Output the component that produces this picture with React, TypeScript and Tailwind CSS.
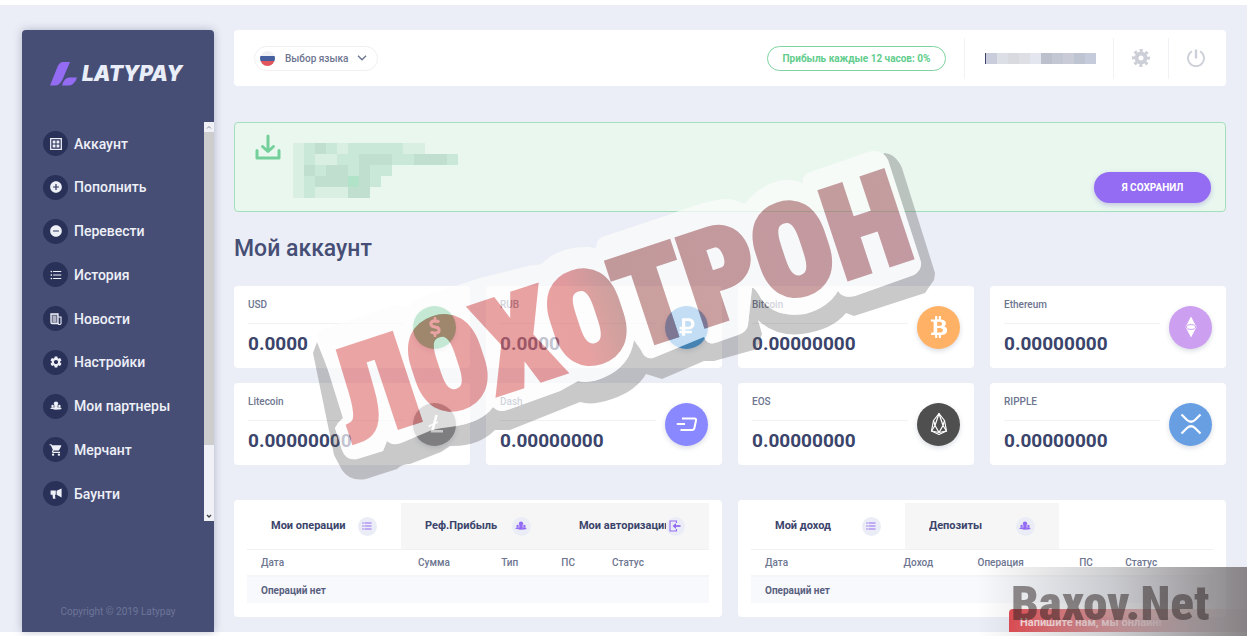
import type { ReactNode } from 'react'
import { FaBtc, FaDollarSign, FaRubleSign } from 'react-icons/fa'
import {
  MdAddCircle,
  MdFormatListBulleted,
  MdRemoveCircle,
  MdSettings,
  MdShoppingCart,
} from 'react-icons/md'

const GridIcon = () => (
  <svg viewBox="0 0 12 12" className="size-3" fill="none" stroke="currentColor">
    <path d="M.7.7h10.6v10.6H.7z" strokeWidth="1.3" />
    <path d="M2.600 2.600h2.900v2.900H2.600zM6.500 2.600h2.900v2.900H6.500zM2.600 6.500h2.900v2.900H2.600zM6.500 6.500h2.900v2.900H6.500z" fill="currentColor" stroke="none" />
  </svg>
)

const NewsIcon = () => (
  <svg viewBox="0 0 12 12" className="size-3" fill="none" stroke="currentColor">
    <path d="M1 1h7v9.5H2.2A1.2 1.2 0 0 1 1 9.3z" fill="currentColor" fillOpacity=".35" strokeWidth="1.3" />
    <path d="M8 4h3v5.3a1.5 1.5 0 0 1-3 1.2M3 4h3M3 6h3M3 8h3" strokeWidth="1.1" />
  </svg>
)

const PeopleIcon = () => (
  <svg viewBox="0 0 12 12" className="size-3" fill="currentColor">
    <circle cx="6" cy="3.6" r="2.2" />
    <circle cx="2.6" cy="6" r="1.2" />
    <circle cx="9.4" cy="6" r="1.2" />
    <path d="M4.400 5h3.200v3H4.400z" />
    <path d="M.4 8.600C.6 7.400 3 7.200 4 7.400h4c1-.2 3.400 0 3.600 1.200C11.600 10.200.4 10.200.4 8.600z" />
  </svg>
)

const HornIcon = () => (
  <svg viewBox="0 0 12 12" className="size-3" fill="currentColor">
    <path d="M.6 2.6h5.2v4.2H5l.4 4H3l-.5-4H.6zM6.600 2.800 11.600.4v9L6.600 6.800z" />
  </svg>
)

const ExitIcon = () => (
  <svg viewBox="0 0 12 12" className="size-3" fill="none" stroke="currentColor" strokeWidth="1.1">
    <path d="M7.5 3V1H1v10h6.500V9" />
    <path d="M5 6h6.500" strokeWidth="1.8" />
    <path d="M3.500 6 7 3v6z" fill="currentColor" stroke="none" />
  </svg>
)

const menu = [
  { label: 'Аккаунт', icon: <GridIcon /> },
  { label: 'Пополнить', icon: <MdAddCircle className="size-[14px]" /> },
  { label: 'Перевести', icon: <MdRemoveCircle className="size-[14px]" /> },
  { label: 'История', icon: <MdFormatListBulleted className="size-[14px]" /> },
  { label: 'Новости', icon: <NewsIcon /> },
  { label: 'Настройки', icon: <MdSettings className="size-[14px]" /> },
  { label: 'Мои партнеры', icon: <PeopleIcon /> },
  { label: 'Мерчант', icon: <MdShoppingCart className="size-[14px]" /> },
  { label: 'Баунти', icon: <HornIcon /> },
]

const wallets = [
  { name: 'USD', value: '0.0000', bg: 'bg-[#41b877]', icon: <FaDollarSign className="size-5" /> },
  { name: 'RUB', value: '0.0000', bg: 'bg-[#3d97df]', icon: <FaRubleSign className="size-5" /> },
  { name: 'Bitcoin', value: '0.00000000', bg: 'bg-[#ffb265]', icon: <FaBtc className="size-[22px]" /> },
  {
    name: 'Ethereum',
    value: '0.00000000',
    bg: 'bg-[#cc9ff0]',
    icon: (
      <svg viewBox="0 0 12 22" className="h-[22px]" fill="currentColor">
        <path d="M6 .5 11.500 11 6 21.500.5 11z" />
        <ellipse cx="6" cy="11" rx="4.500" ry="2.400" fill="none" stroke="#cc9ff0" />
      </svg>
    ),
  },
  {
    name: 'Litecoin',
    value: '0.00000000',
    bg: 'bg-[#8f8f93]',
    icon: (
      <svg viewBox="0 0 22 22" className="size-[22px]" fill="none" stroke="currentColor" strokeWidth="2.6">
        <path d="M12.5 2 8.300 18.300H19" />
        <path d="M4.5 13.5 14 9" strokeWidth="1.6" />
      </svg>
    ),
  },
  {
    name: 'Dash',
    value: '0.00000000',
    bg: 'bg-[#8a88ff]',
    icon: (
      <svg viewBox="0 0 22 18" className="h-[18px]" fill="none" stroke="currentColor" strokeWidth="2">
        <path d="M6 3.5h12.500q2 0 1.500 2l-1.600 7.500q-.4 2-2.400 2H4.500M.8 9H9" />
      </svg>
    ),
  },
  {
    name: 'EOS',
    value: '0.00000000',
    bg: 'bg-[#4f4f4f]',
    icon: (
      <svg viewBox="0 0 18 24" className="h-6" fill="none" stroke="currentColor" strokeWidth="1.2" strokeLinejoin="round">
        <path d="M9 1.500 3.500 8.500 1.500 19 9 22.500 16.500 19 14.500 8.500z" />
        <path d="M9 1.500 5 13.500 9 20.500 13 13.500zM3.500 8.500 5 13.500 1.500 19 9 20.500 16.500 19 13 13.500 14.500 8.500" />
      </svg>
    ),
  },
  {
    name: 'RIPPLE',
    value: '0.00000000',
    bg: 'bg-[#689fe3]',
    icon: (
      <svg viewBox="0 0 22 22" className="size-[22px]" fill="none" stroke="currentColor" strokeWidth="2.2">
        <path d="M1.500 1.500 7 7Q11 10.500 15 7L20.500 1.500M1.500 20.500 7 15Q11 11.500 15 15L20.500 20.500" />
      </svg>
    ),
  },
]

// one digit per mosaic cell, 0 is empty and 3 is the darkest
const noteMosaic = ['123212222211000', '121122333223332', '132332322', '12333432', '1211133']
const noteShades = ['bg-transparent', 'bg-[#d8efe2]', 'bg-[#cae8d7]', 'bg-[#c0dfce]', 'bg-[#b0e3c8]']
const nameShades = [
  'bg-[#c9cddb]', 'bg-[#dddfe6]', 'bg-[#d9d9e0]', 'bg-[#dedfe4]', 'bg-[#e3e6ee]',
  'bg-[#bcc0cd]', 'bg-[#c3c7d3]', 'bg-[#c9ccd7]', 'bg-[#bfc4d2]', 'bg-[#c5cbdb]',
]

interface TabProps {
  label: string
  icon: ReactNode
  active?: boolean
}

interface PanelProps {
  tabs: TabProps[]
  columns: { title: string; width: string }[]
}

function Tab({ label, icon, active }: TabProps) {
  return (
    <button
      className={`flex h-[46px] w-1/3 items-center px-6 text-left text-[11px] font-bold text-[#3b446b] ${active ? 'bg-white' : 'bg-[#f6f6f7]'}`}
    >
      <span className="min-w-0 flex-1 overflow-hidden whitespace-nowrap">{label}</span>
      <span className="flex size-[19px] shrink-0 items-center justify-center rounded-full bg-[#eaedf6] text-[#946cf3]">
        {icon}
      </span>
    </button>
  )
}

function Panel({ tabs, columns }: PanelProps) {
  return (
    <section className="rounded bg-white px-[13px] pt-[3px] pb-[14px]">
      <div className="flex border-b border-[#f1f1f4]">
        {tabs.map((tab) => (
          <Tab key={tab.label} {...tab} />
        ))}
      </div>
      <table className="w-full table-fixed text-left text-[10px]">
        <thead>
          <tr className="h-[26px] border-b-2 border-[#f5f5f7] text-[#6d7590]">
            {columns.map((col) => (
              <th key={col.title} className={`pl-[14px] font-medium ${col.width}`}>
                {col.title}
              </th>
            ))}
          </tr>
        </thead>
        <tbody>
          <tr className="h-[27px] bg-[#f8f9fd]">
            <td colSpan={columns.length} className="pl-[14px] font-bold text-[#59617f]">
              Операций нет
            </td>
          </tr>
        </tbody>
      </table>
    </section>
  )
}

function Sidebar() {
  return (
    <aside className="flex w-48 shrink-0 flex-col rounded-t bg-[#464e75] shadow-[0_0_8px_rgba(70,78,117,0.35)]">
      <a href="#" className="flex h-[92px] items-center gap-1 pb-1 pl-7 text-[#e9edf8]">
        <svg viewBox="0 0 28 24" className="h-6 w-7" fill="#946cf3">
          <path d="M12.500 0H20L12.500 17.500Q9.500 23.500 5 23.500H0L7 6Q9 .5 12.500 0z" />
          <path d="M19.500 15.500H27Q26 19.500 23 22 21 23.500 18 23.500H12Q13 19.500 15 17.500 17 15.500 19.500 15.500z" />
        </svg>
        <span className="font-['Inter',sans-serif] text-[21px] leading-6 font-black italic">LATYPAY</span>
      </a>
      <div className="flex h-[399px]">
        <nav className="flex flex-1 flex-col justify-between pt-[9px] pb-[15px] pl-[21px]">
          {menu.map((item) => (
            <a key={item.label} href="#" className="flex items-center gap-[6px] text-sm font-medium text-[#eef0f8]">
              <span className="flex size-[25px] items-center justify-center rounded-full bg-[#2a3158]">{item.icon}</span>
              {item.label}
            </a>
          ))}
        </nav>
        <div className="flex w-[10px] flex-col bg-[#eff1f6] text-[#8b8d93]" aria-hidden="true">
          <svg viewBox="0 0 10 10" className="size-[10px]" fill="none" stroke="currentColor">
            <path d="M3 6.500 5 4.500 7 6.500" />
          </svg>
          <div className="h-[313px] bg-[#cdcdcd]" />
          <svg viewBox="0 0 10 10" className="mt-auto size-[10px]" fill="none" stroke="#444" strokeWidth="1.4">
            <path d="M3 4 5 6 7 4" />
          </svg>
        </div>
      </div>
      <p className="mt-auto pb-[14px] text-center text-[10px] leading-3 text-[#6d7598]">Copyright © 2019 Latypay</p>
    </aside>
  )
}

function Header() {
  return (
    <header className="flex h-14 items-center rounded bg-white pl-5">
      <label className="flex h-[25px] items-center rounded-full border border-[#f0f0f3] px-[5px] text-[#6d7590]">
        <svg viewBox="0 0 15 15" className="size-[15px]">
          <clipPath id="flag">
            <circle cx="7.500" cy="7.500" r="7.500" />
          </clipPath>
          <g clipPath="url(#flag)">
            <path fill="#f0f1f4" d="M0 0h15v5H0z" />
            <path fill="#46609f" d="M0 5h15v5H0z" />
            <path fill="#e2555c" d="M0 10h15v5H0z" />
          </g>
        </svg>
        <select aria-label="Язык" className="ml-[10px] w-[72px] appearance-none text-[10px] font-medium outline-none">
          <option>Выбор языка</option>
        </select>
        <svg viewBox="0 0 10 6" className="mr-[5px] h-[6px] w-[10px]" fill="none" stroke="currentColor" strokeWidth="1.4">
          <path d="M1 .8 5 4.800 9 .8" />
        </svg>
      </label>
      <div className="mr-[18px] ml-auto flex h-[25px] w-[179px] items-center justify-center rounded-full border border-[#7fd3a0] text-[10px] font-bold text-[#62cd8c]">
        Прибыль каждые 12 часов: 0%
      </div>
      <div className="flex h-[41px] w-[149px] items-center border-l border-[#f1f2f5] pl-5">
        <span className="h-[11px] w-px bg-[#3b446b]" />
        <div className="flex h-[11px]">
          {nameShades.map((shade) => (
            <span key={shade} className={`w-[11px] ${shade}`} />
          ))}
        </div>
      </div>
      <button aria-label="Настройки" className="flex h-[41px] w-[55px] items-center justify-center border-l border-[#f1f2f5] text-[#cdcfd8]">
        <svg viewBox="0 0 18 18" className="size-[18px]" fill="none" stroke="currentColor">
          <circle cx="9" cy="9" r="4.500" strokeWidth="4" />
          <circle cx="9" cy="9" r="7.500" strokeWidth="3" strokeDasharray="3 2.890" strokeDashoffset="1.5" />
        </svg>
      </button>
      <button aria-label="Выход" className="flex h-[41px] w-[58px] items-center justify-center border-l border-[#f1f2f5] pr-1 text-[#cdcfd8]">
        <svg viewBox="0 0 18 18" className="size-[18px]" fill="none" stroke="currentColor" strokeWidth="1.8">
          <path d="M5 2.300A8 8 0 1 0 13 2.300" />
          <path d="M9 .5v9" strokeWidth="2.4" />
        </svg>
      </button>
    </header>
  )
}

function Notice() {
  return (
    <section className="mt-9 flex h-[90px] items-start rounded-sm border border-[#a3dfba] bg-[#e9f7ef] pl-5">
      <svg viewBox="0 0 26 26" className="mt-[11px] size-[26px]" fill="none" stroke="#74d09a" strokeWidth="3" strokeLinecap="round" strokeLinejoin="round">
        <path d="M2 16.500V24h22v-7.500M13 2v15M7.500 12.500 13 17.500 18.500 12.500" />
      </svg>
      <div className="mt-5 ml-3">
        {noteMosaic.map((row) => (
          <div key={row} className="flex">
            {row.split('').map((cell, i) => (
              <span key={i} className={`size-[11px] ${noteShades[Number(cell)]}`} />
            ))}
          </div>
        ))}
      </div>
      <button className="mt-[49px] mr-[14px] ml-auto h-[31px] w-[117px] rounded-full bg-[#946cf3] text-[10px] font-bold text-white shadow-[0_2px_5px_rgba(120,100,200,0.35)]">
        Я СОХРАНИЛ
      </button>
    </section>
  )
}

function Stamp() {
  const word = (
    <text
      transform="translate(351 443) rotate(-18.3)"
      fontFamily="'Roboto Condensed', sans-serif"
      fontSize="128"
      fontWeight="900"
      strokeWidth="5"
    >
      ЛОХОТРОН
    </text>
  )
  const sticker =
    'M318 338Q316 331 323 329L392 306Q399 304 408 307Q418 296 440 291L480 278L532 265Q541 266 546 260Q562 246 590 247Q597 251 597 243Q598 238 605 236L668 215Q720 195 734 200L745 204Q760 184 783 180Q795 179 803 184Q801 175 810 172L868 152Q882 148 888 160L921 262Q922 270 914 275L855 296Q843 299 838 291Q828 308 805 314Q775 318 762 300Q754 286 752 288L748 325Q747 332 738 335L715 343Q707 345 704 337L653 358Q645 360 641 350L634 340Q630 366 605 377Q590 384 578 381L560 391L507 410Q499 413 493 407Q482 423 450 427Q440 428 432 430L401 443Q392 446 387 441L383 451L357 459Q346 461 342 450L335 428Q338 422 343 418z'
  return (
    <svg viewBox="0 0 1247 636" className="pointer-events-none absolute -top-[5px] left-0 w-[1247px]" aria-hidden="true">
      <defs>
        {/* runs along the baseline of the rotated word */}
        <linearGradient id="ink" gradientUnits="userSpaceOnUse" x1="0" y1="0" x2="600" y2="0">
          <stop offset="0" stopColor="#df6969" />
          <stop offset=".42" stopColor="#da6464" />
          <stop offset=".5" stopColor="#a8625f" />
          <stop offset="1" stopColor="#ab636b" />
        </linearGradient>
        <mask id="outside-sticker" maskUnits="userSpaceOnUse" x="0" y="0" width="1247" height="636">
          <path fill="#fff" d="M0 0h1247v636H0z" />
          <path fill="#000" d={sticker} />
        </mask>
        <mask id="outside-word" maskUnits="userSpaceOnUse" x="0" y="0" width="1247" height="636">
          <path fill="#fff" d="M0 0h1247v636H0z" />
          <g fill="#000" stroke="#000">{word}</g>
        </mask>
      </defs>
      <path
        mask="url(#outside-sticker)"
        fill="#5a5a5a"
        fillOpacity=".33"
        d="M317 342L313 353L334 455L342 470Q350 482 366 479L397 469Q402 464 410 464L441 452L450 446Q478 447 495 430L510 430L580 402Q592 406 612 399Q636 391 646 374L662 379L704 361L714 361L757 349L762 334L758 320Q775 337 802 334Q832 330 846 313L854 316L925 293L934 280L935 273L902 168Q896 154 884 153L870 200L340 400z"
      />
      <path mask="url(#outside-word)" fill="#fcfcfc" fillOpacity=".7" d={sticker} />
      <g fill="url(#ink)" stroke="url(#ink)" opacity=".6">{word}</g>
    </svg>
  )
}

function Watermark() {
  return (
    <div className="absolute right-0 -bottom-1 h-[69px] w-[270px] overflow-hidden" aria-hidden="true">
      <div className="absolute right-0 bottom-1 h-[23px] w-[238px] rounded-tl bg-linear-to-r from-[#e2454c] to-[#c97d72]/20 to-90% pl-[11px] text-[11px] leading-[27px] font-bold text-[#ffdcdc]">
        Напишите нам, мы онлайн!
      </div>
      <div className="absolute inset-0 bg-linear-to-r from-transparent via-[#85868b]/40 to-[#7d787b]/90" />
      <p className="absolute top-[8px] left-[34px] font-['Roboto_Condensed',sans-serif] text-[49px] leading-[58px] font-black text-[#2a2020]/50">
        Baxov.Net
      </p>
    </div>
  )
}

export default function App() {
  return (
    <div className="border-t-[5px] border-b-4 border-white bg-[#ebeef6] font-['Roboto',sans-serif]">
      <div className="relative">
        <div className="flex gap-5 pt-[25px] pr-[21px] pl-[22px]">
          <Sidebar />
          <main className="min-w-0 flex-1 pb-[15px]">
            <Header />
            <Notice />
            <h1 className="mt-[21px] text-[23px] leading-8 font-medium text-[#464e75]">Мой аккаунт</h1>
            <div className="mt-[21px] grid grid-cols-4 gap-x-4 gap-y-[15px]">
              {wallets.map(({ name, value, bg, icon }) => (
                <div key={name} className="flex items-center gap-[9px] rounded bg-white px-[14px]">
                  <div className="flex-1 pt-[13px] pb-3">
                    <p className="border-b border-[#f1f1f4] pb-3 text-[10px] leading-3 font-medium text-[#6d7590]">{name}</p>
                    <p className="pt-2 text-[19px] leading-6 font-bold text-[#3b446b]">{value}</p>
                  </div>
                  <span className={`flex size-[43px] items-center justify-center rounded-full text-white shadow-[0_2px_5px_rgba(70,78,117,0.2)] ${bg}`}>
                    {icon}
                  </span>
                </div>
              ))}
            </div>
            <div className="mt-[35px] grid grid-cols-2 gap-4">
              <Panel
                tabs={[
                  { label: 'Мои операции', icon: <MdFormatListBulleted className="size-3" />, active: true },
                  { label: 'Реф.Прибыль', icon: <PeopleIcon /> },
                  { label: 'Мои авторизации', icon: <ExitIcon /> },
                ]}
                columns={[
                  { title: 'Дата', width: 'w-[34%]' },
                  { title: 'Сумма', width: 'w-[18%]' },
                  { title: 'Тип', width: 'w-[13%]' },
                  { title: 'ПС', width: 'w-[11%]' },
                  { title: 'Статус', width: 'w-[24%]' },
                ]}
              />
              <Panel
                tabs={[
                  { label: 'Мой доход', icon: <MdFormatListBulleted className="size-3" />, active: true },
                  { label: 'Депозиты', icon: <PeopleIcon /> },
                ]}
                columns={[
                  { title: 'Дата', width: 'w-[30%]' },
                  { title: 'Доход', width: 'w-[16%]' },
                  { title: 'Операция', width: 'w-[22%]' },
                  { title: 'ПС', width: 'w-[10%]' },
                  { title: 'Статус', width: 'w-[22%]' },
                ]}
              />
            </div>
          </main>
        </div>
        <Stamp />
        <Watermark />
      </div>
    </div>
  )
}
